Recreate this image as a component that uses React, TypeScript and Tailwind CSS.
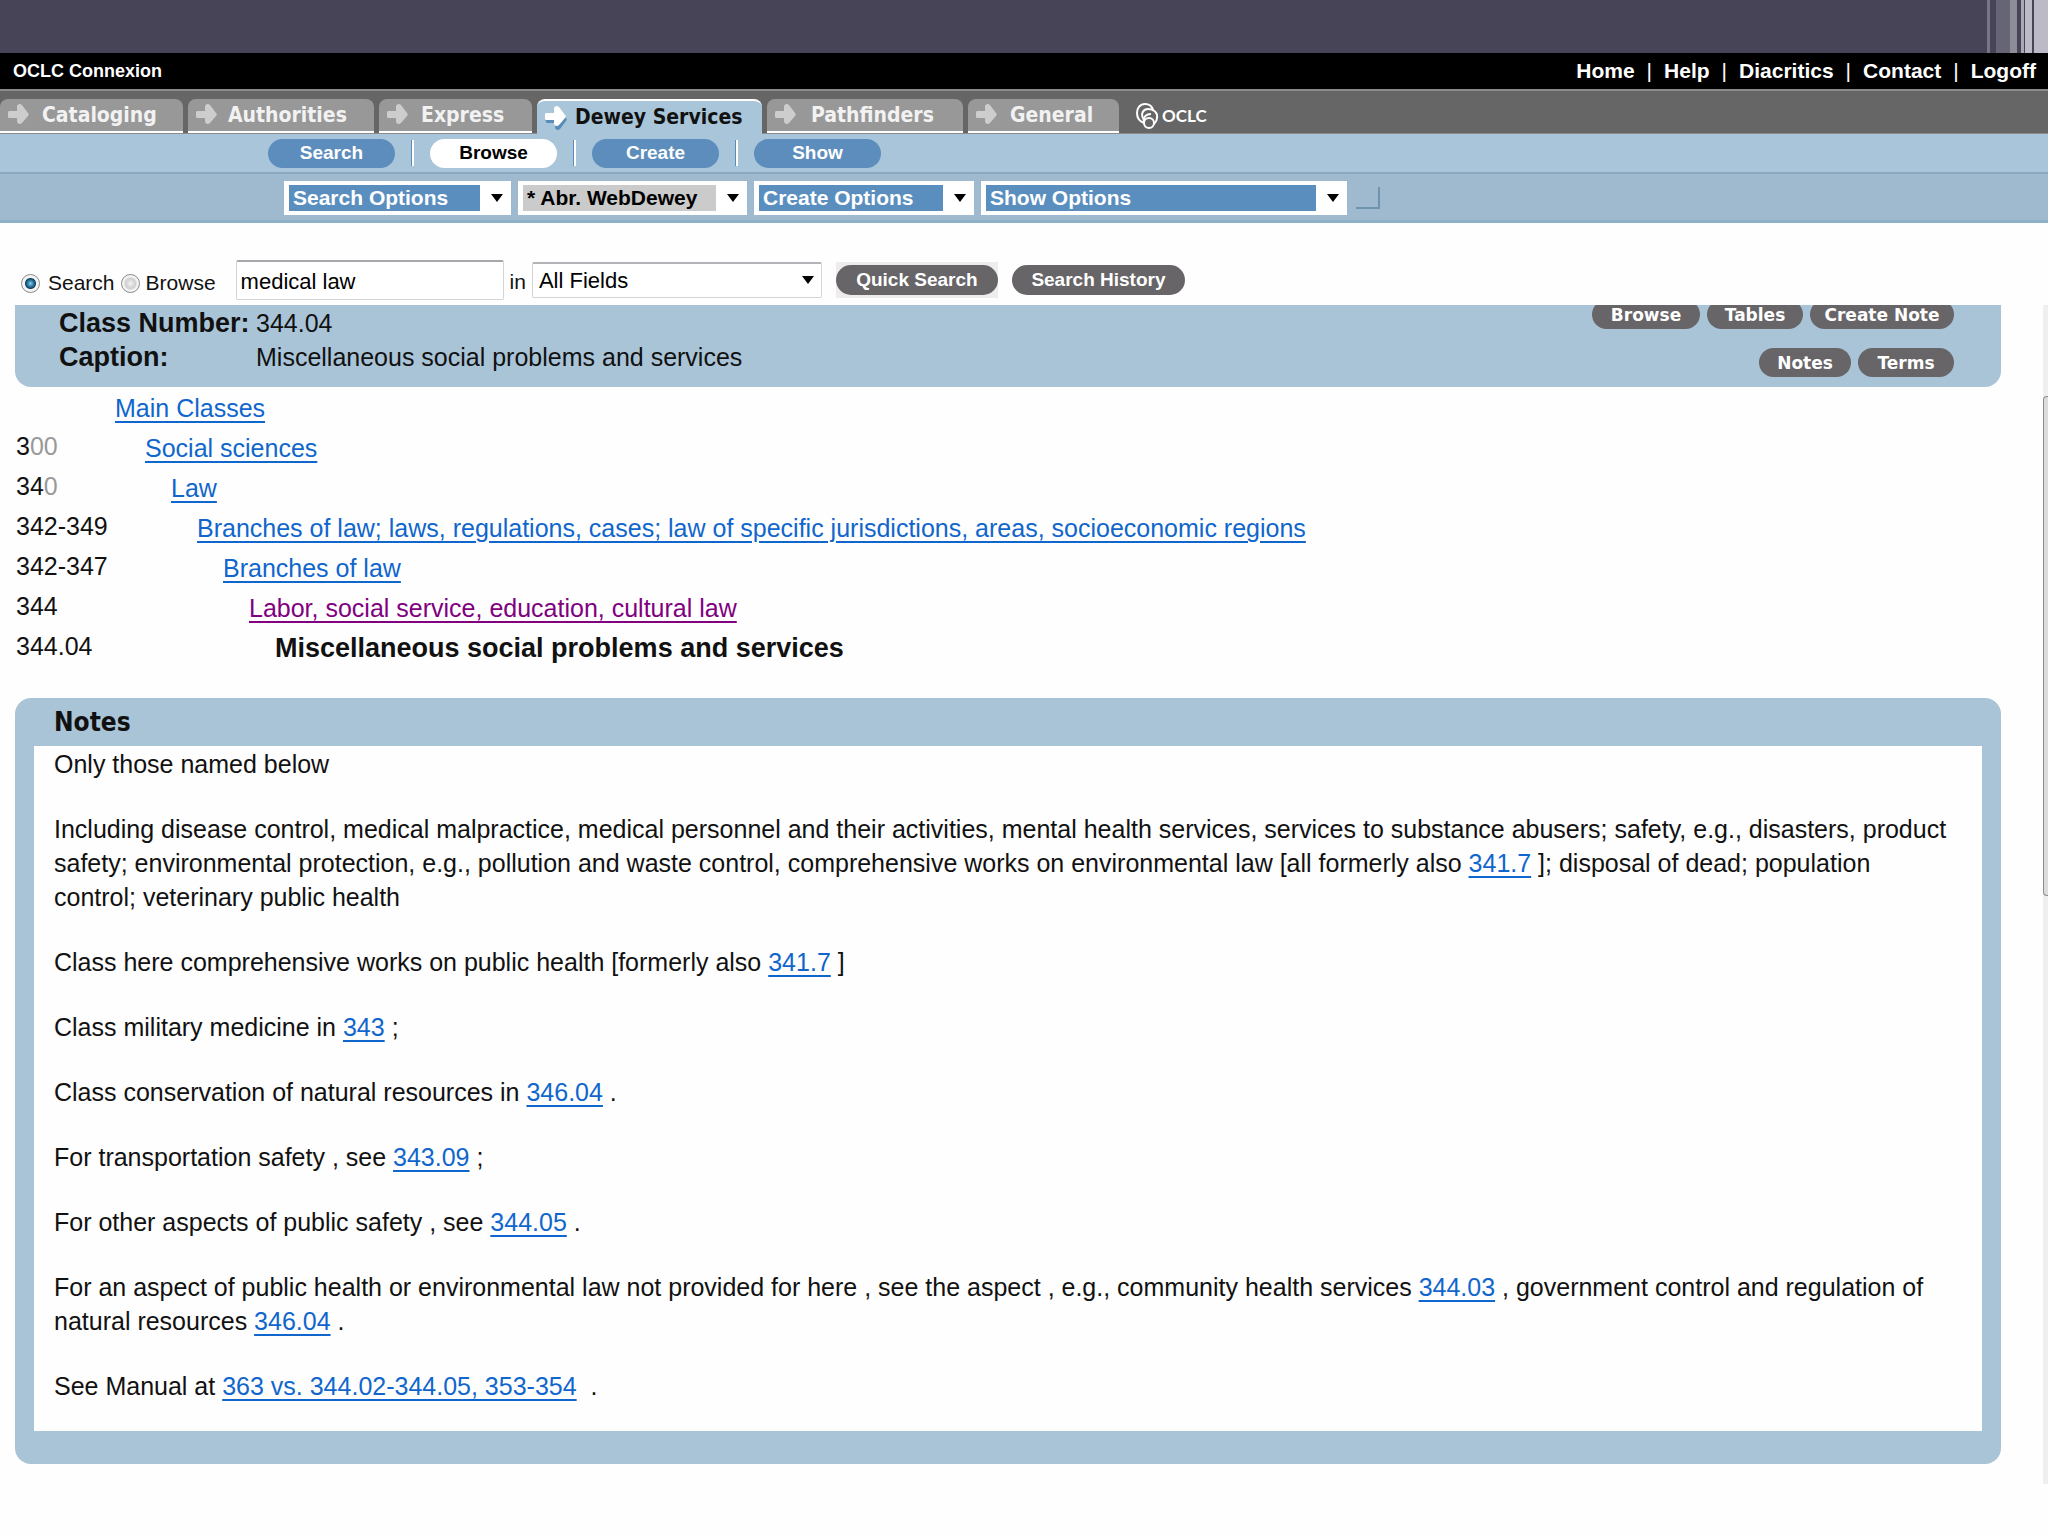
import type { ReactNode } from 'react';

const tabs = [
  { label: 'Cataloging', width: 'w-[183px]', gap: 'gap-2' },
  { label: 'Authorities', width: 'w-[186px]', gap: 'gap-1.5' },
  { label: 'Express', width: 'w-[153px]', gap: 'gap-2' },
  { label: 'Dewey Services', width: 'w-[225px]', gap: 'gap-1', active: true },
  { label: 'Pathfinders', width: 'w-[196px]', gap: 'gap-2.5' },
  { label: 'General', width: 'w-[151px]', gap: 'gap-2' },
];

const subTabs = ['Search', 'Browse', 'Create', 'Show'];

const menus = [
  { label: 'Search Options', width: 'w-[227px]' },
  { label: '* Abr. WebDewey', width: 'w-[229px]', changed: true },
  { label: 'Create Options', width: 'w-[220px]' },
  { label: 'Show Options', width: 'w-[366px]' },
];

const hierarchy = [
  { num: '', zeros: '', label: 'Main Classes', indent: 'pl-0' },
  { num: '3', zeros: '00', label: 'Social sciences', indent: 'pl-[30px]' },
  { num: '34', zeros: '0', label: 'Law', indent: 'pl-[56px]' },
  {
    num: '342-349',
    zeros: '',
    label: 'Branches of law; laws, regulations, cases; law of specific jurisdictions, areas, socioeconomic regions',
    indent: 'pl-[82px]',
  },
  { num: '342-347', zeros: '', label: 'Branches of law', indent: 'pl-[108px]' },
  { num: '344', zeros: '', label: 'Labor, social service, education, cultural law', indent: 'pl-[134px]', visited: true },
  { num: '344.04', zeros: '', label: 'Miscellaneous social problems and services', indent: 'pl-[160px]', current: true },
];

function ArrowIcon({ active }: { active?: boolean }) {
  return (
    <svg width="26" height="26" viewBox="0 0 26 26" className="shrink-0" aria-hidden="true">
      {active && (
        <path
          transform="translate(1 3)"
          d="M1 8H9V4C9 1 12 0 14 2L20 10C21 11 21 12 20 13L14 21C12 23 9 22 9 19V15H1C-1 14 -1 9 1 8Z"
          fill="#5a8cb8"
        />
      )}
      <path
        d="M1 8H9V4C9 1 12 0 14 2L20 10C21 11 21 12 20 13L14 20C12 22 9 21 9 18V15H1C-1 14 -1 9 1 8Z"
        fill={active ? '#ffffff' : '#cdcdcd'}
      />
    </svg>
  );
}

function Caret() {
  return (
    <svg width="12" height="8" viewBox="0 0 12 8" className="pointer-events-none absolute top-1/2 right-2 -mt-1" aria-hidden="true">
      <path d="M0 0H12L6 8Z" fill="#000000" />
    </svg>
  );
}

function Logo() {
  return (
    <div className="ml-3 flex h-[34px] items-center gap-0.5 text-white">
      <svg width="24" height="26" viewBox="0 0 24 26" fill="none" stroke="#ffffff" aria-hidden="true">
        <path d="M8 20C3 18 1 14 1 10C1 5 4 1 9 1C13 1 16 3 17 7" strokeWidth="2" />
        <path d="M8 17C4 11 7 6 12 6C18 6 22 10 21 15C21 17 20 19 18 21" strokeWidth="2" />
        <circle cx="13" cy="20" r="5" strokeWidth="2" />
        <path d="M8 19C7 14 10 11 15 11" strokeWidth="2" />
      </svg>
      <span className="font-['Lato'] text-[17px] font-bold">OCLC</span>
    </div>
  );
}

function PillButton({ children, width }: { children: ReactNode; width: string }) {
  return (
    <button
      type="button"
      className={`${width} h-[29px] rounded-full bg-[#676567] font-['DejaVu_Sans'] text-[17px] leading-[28px] font-bold text-white`}
    >
      {children}
    </button>
  );
}

function Ref({ children }: { children: ReactNode }) {
  return (
    <a href="#" className="text-[#1066cc] underline decoration-2 underline-offset-4">
      {children}
    </a>
  );
}

export default function App() {
  return (
    <div className="min-h-screen bg-[#fefefe] font-['Liberation_Sans',sans-serif] text-[#111111]">
      <div className="flex h-[53px] justify-end bg-[#464456]">
        <div className="w-[3px] bg-[#777687]" />
        <div className="ml-1.5 w-3.5 bg-[#666575]" />
        <div className="w-[7px] bg-[#8e8d97]" />
        <div className="ml-1 w-[3px] bg-[#a9a8b4]" />
        <div className="ml-px w-[7px] bg-[#bbbac6]" />
        <div className="ml-0.5 w-3.5 bg-[#bbbac6]" />
      </div>

      <header>
        <div className="flex h-9 items-center justify-between bg-black pr-3 pl-[13px] font-bold text-white">
          <h1 className="text-[18px]">OCLC Connexion</h1>
          <nav className="flex items-center gap-3 text-[21px]">
            <a href="#">Home</a>
            <span className="font-normal">|</span>
            <a href="#">Help</a>
            <span className="font-normal">|</span>
            <a href="#">Diacritics</a>
            <span className="font-normal">|</span>
            <a href="#">Contact</a>
            <span className="font-normal">|</span>
            <a href="#">Logoff</a>
          </nav>
        </div>

        <nav className="flex h-[45px] items-end gap-[5px] border-t-2 border-b border-t-[#8c8b8c] border-b-[#8c8b8c] bg-[#676667]">
          {tabs.map((tab) => (
            <a
              key={tab.label}
              href="#"
              className={`${tab.width} ${tab.gap} flex items-center rounded-t-lg pl-2 font-['DejaVu_Sans_Condensed','DejaVu_Sans'] text-[21px] font-bold whitespace-nowrap ${
                tab.active
                  ? '-mb-px h-[35px] border-t-2 border-white bg-[#a9c5d9] text-[#111111]'
                  : 'h-[34px] border-b-2 border-white bg-[#999899] pt-0.5 text-[#f2f2f2]'
              }`}
            >
              <ArrowIcon active={tab.active} />
              {tab.label}
            </a>
          ))}
          <Logo />
        </nav>

        <nav className="flex h-10 items-center border-b-2 border-[#8aa9c0] bg-[#a9c5d9] pl-[268px]">
          {subTabs.map((label, i) => (
            <div key={label} className="flex items-center">
              {i > 0 && <span className="mx-4 h-[26px] w-[3px] border-r-2 border-l border-r-white border-l-[#5b8dbb]" />}
              <button
                type="button"
                className={`h-[29px] w-[127px] rounded-full text-[19px] leading-[28px] font-bold ${
                  label === 'Browse' ? 'bg-white text-black' : 'bg-[#5c8dbc] text-white'
                }`}
              >
                {label}
              </button>
            </div>
          ))}
        </nav>

        <div className="flex h-[49px] items-center gap-[7px] border-b-[3px] border-[#8bb0c8] bg-[#9fb9cf] pt-0.5 pl-[284px]">
          {menus.map((menu) => (
            <div key={menu.label} className={`${menu.width} relative`}>
              <select
                aria-label={menu.label}
                className={`block h-[34px] w-full appearance-none border-y-4 border-r-[31px] border-l-[5px] border-white pl-1 text-[21px] leading-[26px] font-bold ${
                  menu.changed ? 'bg-[#cbcbcb] text-black' : 'bg-[#5a8ebf] text-white'
                }`}
              >
                <option>{menu.label}</option>
              </select>
              <Caret />
            </div>
          ))}
          <span className="ml-0.5 h-[22px] w-6 border-r-2 border-b-2 border-[#6f93ad]" />
        </div>
      </header>

      <form className="flex h-[82px] items-end pb-[5px] pl-[21px] text-[22px]">
        <div className="flex h-[38px] items-center pt-1 text-[21px]">
          <input
            id="mode-search"
            type="radio"
            name="mode"
            defaultChecked
            className="size-[19px] appearance-none rounded-full border border-[#8a8a8a] bg-[radial-gradient(circle,#7fd0f0_0,#1b5f88_4px,#12405e_5px,#f4f4f4_6px)]"
          />
          <label htmlFor="mode-search" className="mr-1.5 ml-2">
            Search
          </label>
          <input
            id="mode-browse"
            type="radio"
            name="mode"
            className="size-[19px] appearance-none rounded-full border border-[#8a8a8a] bg-[radial-gradient(circle,#f2f2f2_0,#cfcfcf_5px,#f4f4f4_7px)]"
          />
          <label htmlFor="mode-browse" className="ml-1.5">
            Browse
          </label>
        </div>
        <input
          type="text"
          aria-label="Search terms"
          defaultValue="medical law"
          className="ml-5 h-10 w-[268px] rounded-xs border border-t-2 border-[#d4d4d8] border-t-[#a8a8ac] bg-white px-1 pt-0.5 text-black"
        />
        <label htmlFor="field" className="ml-1.5 h-[34px] text-[21px]">
          in
        </label>
        <div className="relative mb-0.5 ml-1.5 w-[290px]">
          <select
            id="field"
            className="block h-9 w-full appearance-none rounded-xs border border-t-2 border-[#d4d4d8] border-t-[#b4b4b8] bg-white pl-1.5 text-black"
          >
            <option>All Fields</option>
          </select>
          <Caret />
        </div>
        <div className="mb-0.5 ml-3.5 bg-[#efeced] py-[3px]">
          <button type="button" className="block h-[30px] w-[162px] rounded-full bg-[#676567] text-[19px] font-bold text-white">
            Quick Search
          </button>
        </div>
        <button type="button" className="mb-[5px] ml-3.5 h-[30px] w-[173px] rounded-full bg-[#676567] text-[19px] font-bold text-white">
          Search History
        </button>
      </form>

      <div className="flex">
        <main className="flex-1 pr-[42px] pb-5 pl-[15px] text-[25px] leading-[34px]">
          <section className="flex h-[82px] justify-between overflow-hidden rounded-b-2xl bg-[#a9c4d7] pr-[47px] pl-11">
            <dl className="grid h-[69px] grid-cols-[197px_auto] pt-px">
              <dt className="text-[27px] font-bold whitespace-nowrap">Class Number:</dt>
              <dd>344.04</dd>
              <dt className="text-[27px] font-bold">Caption:</dt>
              <dd>Miscellaneous social problems and services</dd>
            </dl>
            <div className="-mt-[5px] flex flex-col items-end gap-[19px] leading-none">
              <div className="flex gap-[7px]">
                <PillButton width="w-[108px]">Browse</PillButton>
                <PillButton width="w-[96px]">Tables</PillButton>
                <PillButton width="w-[144px]">Create Note</PillButton>
              </div>
              <div className="flex gap-[7px]">
                <PillButton width="w-[92px]">Notes</PillButton>
                <PillButton width="w-[96px]">Terms</PillButton>
              </div>
            </div>
          </section>

          <table className="mt-px border-collapse">
            <tbody>
              {hierarchy.map((row) => (
                <tr key={row.label} className="h-10">
                  <td className="w-[100px] p-0 pb-1 pl-px align-middle">
                    {row.num}
                    <span className="text-[#999999]">{row.zeros}</span>
                  </td>
                  <td className={`${row.indent} align-middle`}>
                    {row.current ? (
                      <strong className="text-[27px]">{row.label}</strong>
                    ) : (
                      <a
                        href="#"
                        className={`underline decoration-2 underline-offset-4 ${row.visited ? 'text-[#800080]' : 'text-[#1066cc]'}`}
                      >
                        {row.label}
                      </a>
                    )}
                  </td>
                </tr>
              ))}
            </tbody>
          </table>

          <section className="mt-[30px] rounded-2xl bg-[#a9c4d7] px-[19px] pb-[33px]">
            <h2 className="h-12 pl-5 font-['DejaVu_Sans_Condensed','DejaVu_Sans'] text-[26px] leading-[48px] font-bold">Notes</h2>
            <div className="flex flex-col gap-[31px] bg-[#fefefe] pt-px pr-8 pb-7 pl-5">
              <p>Only those named below</p>
              <p>
                Including disease control, medical malpractice, medical personnel and their activities, mental health
                services, services to substance abusers; safety, e.g., disasters, product safety; environmental
                protection, e.g., pollution and waste control, comprehensive works on environmental law [all formerly
                also <Ref>341.7</Ref> ]; disposal of dead; population control; veterinary public health
              </p>
              <p>
                Class here comprehensive works on public health [formerly also <Ref>341.7</Ref> ]
              </p>
              <p>
                Class military medicine in <Ref>343</Ref> ;
              </p>
              <p>
                Class conservation of natural resources in <Ref>346.04</Ref> .
              </p>
              <p>
                For transportation safety , see <Ref>343.09</Ref> ;
              </p>
              <p>
                For other aspects of public safety , see <Ref>344.05</Ref> .
              </p>
              <p>
                For an aspect of public health or environmental law not provided for here , see the aspect , e.g.,
                community health services <Ref>344.03</Ref> , government control and regulation of natural resources{' '}
                <Ref>346.04</Ref> .
              </p>
              <p>
                See Manual at <Ref>363 vs. 344.02-344.05, 353-354</Ref> &nbsp;.
              </p>
            </div>
          </section>
        </main>

        <div className="w-[5px] bg-[#f0eef0] pt-[91px]">
          <div className="h-[500px] rounded-l-sm border border-r-0 border-[#8d8c90] bg-[#dcdbde]" />
        </div>
      </div>
    </div>
  );
}
